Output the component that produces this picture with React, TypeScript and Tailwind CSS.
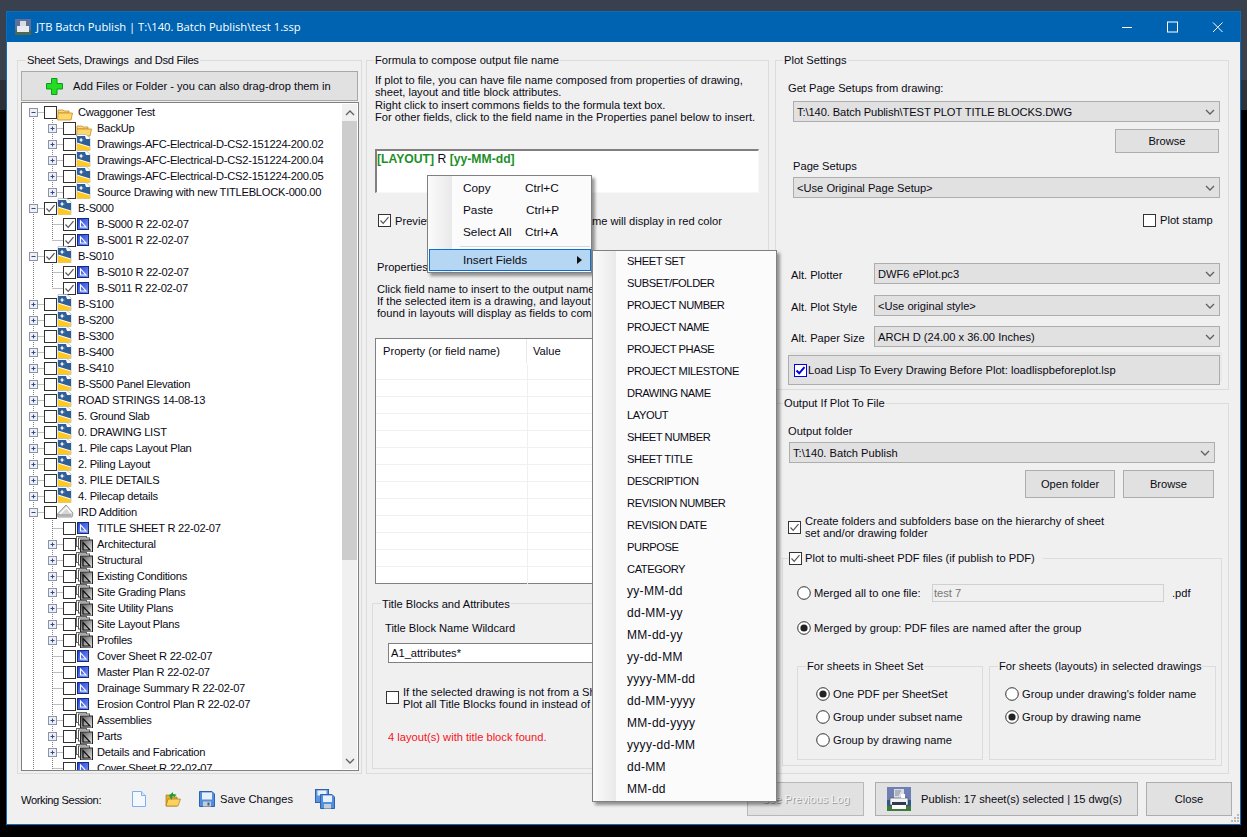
import React from "react";

type Kind = "folder" | "dwg" | "sheet" | "subset" | "ssm";
type Row = { label: string; level: 0 | 1; exp?: "plus" | "minus"; checked?: boolean; icon: Kind; first?: boolean; last?: boolean };

const sub = (label: string): Row => ({ label, level: 1, exp: "plus", icon: "subset" });
const sh = (label: string, checked = false, last = false): Row => ({ label, level: 1, icon: "sheet", checked, last });
const top = (label: string): Row => ({ label, level: 0, exp: "plus", icon: "dwg" });

const rows: Row[] = [
  { label: "Cwaggoner Test", level: 0, exp: "minus", icon: "folder", first: true },
  { label: "BackUp", level: 1, exp: "plus", icon: "folder" },
  { label: "Drawings-AFC-Electrical-D-CS2-151224-200.02", level: 1, exp: "plus", icon: "dwg" },
  { label: "Drawings-AFC-Electrical-D-CS2-151224-200.04", level: 1, exp: "plus", icon: "dwg" },
  { label: "Drawings-AFC-Electrical-D-CS2-151224-200.05", level: 1, exp: "plus", icon: "dwg" },
  { label: "Source Drawing with new TITLEBLOCK-000.00", level: 1, exp: "plus", icon: "dwg", last: true },
  { label: "B-S000", level: 0, exp: "minus", icon: "dwg", checked: true },
  sh("B-S000 R 22-02-07", true),
  sh("B-S001 R 22-02-07", true, true),
  { label: "B-S010", level: 0, exp: "minus", icon: "dwg", checked: true },
  sh("B-S010 R 22-02-07", true),
  sh("B-S011 R 22-02-07", true, true),
  top("B-S100"), top("B-S200"), top("B-S300"), top("B-S400"), top("B-S410"), top("B-S500 Panel Elevation"),
  top("ROAD STRINGS 14-08-13"), top("5. Ground Slab"), top("0. DRAWING LIST"), top("1. Pile caps Layout Plan"),
  top("2. Piling Layout"), top("3. PILE DETAILS"), top("4. Pilecap details"),
  { label: "IRD Addition", level: 0, exp: "minus", icon: "ssm" },
  sh("TITLE SHEET R 22-02-07"),
  sub("Architectural"), sub("Structural"), sub("Existing Conditions"), sub("Site Grading Plans"),
  sub("Site Utility Plans"), sub("Site Layout Plans"), sub("Profiles"),
  sh("Cover Sheet R 22-02-07"), sh("Master Plan R 22-02-07"), sh("Drainage Summary R 22-02-07"), sh("Erosion Control Plan R 22-02-07"),
  sub("Assemblies"), sub("Parts"), sub("Details and Fabrication"),
  sh("Cover Sheet R 22-02-07"),
];

const upperFields = ["SHEET SET", "SUBSET/FOLDER", "PROJECT NUMBER", "PROJECT NAME", "PROJECT PHASE", "PROJECT MILESTONE", "DRAWING NAME", "LAYOUT", "SHEET NUMBER", "SHEET TITLE", "DESCRIPTION", "REVISION NUMBER", "REVISION DATE", "PURPOSE", "CATEGORY"];
const dateFields = ["yy-MM-dd", "dd-MM-yy", "MM-dd-yy", "yy-dd-MM", "yyyy-MM-dd", "dd-MM-yyyy", "MM-dd-yyyy", "yyyy-dd-MM", "dd-MM", "MM-dd"];

function Gutter({ r }: { r: Row }) {
  const w = r.level === 0 ? 22 : 41;
  const cx = r.level === 0 ? 11.5 : 30.5;
  const dot = { stroke: "#808080", strokeWidth: 1, strokeDasharray: "1 1" };
  return (
    <svg width={w} height={16} className="shrink-0 block">
      <line x1={11.5} x2={11.5} y1={r.first ? 8 : 0} y2={16} {...dot} />
      {r.level === 1 && <line x1={30.5} x2={30.5} y1={0} y2={r.last ? 8 : 16} {...dot} />}
      <line x1={cx} x2={w} y1={8.5} y2={8.5} {...dot} />
      {r.exp && (
        <g>
          <rect x={cx - 4} y={4.5} width={8} height={8} fill="#eef0f4" stroke="#8a94a6" />
          <line x1={cx - 2} x2={cx + 2} y1={8.5} y2={8.5} stroke="#2c4a9a" />
          {r.exp === "plus" && <line x1={cx} x2={cx} y1={6.5} y2={10.5} stroke="#2c4a9a" />}
        </g>
      )}
    </svg>
  );
}

function Box({ checked, blue }: { checked?: boolean; blue?: boolean }) {
  const c = blue ? "#0000e0" : "#333333";
  return (
    <svg width={13} height={13} className="shrink-0 block">
      <rect x={0.5} y={0.5} width={12} height={12} fill="#fff" stroke={c} />
      {checked && <path d="M2.5 6.5 L5.2 9.3 L10.5 3.2" fill="none" stroke={blue ? "#0000e0" : "#555"} strokeWidth={blue ? 2 : 1.2} />}
    </svg>
  );
}

function Radio({ on }: { on?: boolean }) {
  return (
    <svg width={14} height={14} className="shrink-0 block">
      <circle cx={7} cy={7} r={6.3} fill="#fff" stroke="#333" />
      {on && <circle cx={7} cy={7} r={3.6} fill="#222" />}
    </svg>
  );
}

function Icon({ k }: { k: Kind }) {
  if (k === "folder")
    return (
      <svg width={16} height={14} className="shrink-0 block mt-[3px]">
        <path d="M1 3 h5 l1 1 h5 v2 H1z" fill="#f9d88a" stroke="#c98a1e" strokeWidth={0.8} />
        <path d="M0.6 13 L1 6 H15.5 L14 13z" fill="#fdd86c" stroke="#c98a1e" strokeWidth={0.8} />
      </svg>
    );
  if (k === "dwg")
    return (
      <svg width={15} height={17} className="shrink-0 block -mt-[3px]">
        <path d="M1 0.5 H10 L14 4 V16.5 H1z" fill="#fff" stroke="#9aa8c0" strokeWidth={0.6} />
        <path d="M1 2 H9 L10 5 H14 V12.5 L1 8.5z" fill="#2f5f96" />
        <path d="M1 9.5 L14 13.5 V16.5 H1z" fill="#ffc91f" />
        <path d="M5 3.5 L6 5.5 L8 6 L6 6.6 L5 8.6 L4.2 6.6 L2.4 6 L4.2 5.5z" fill="#fff" />
      </svg>
    );
  if (k === "sheet")
    return (
      <svg width={12} height={12} className="shrink-0 block ml-[1px]">
        <defs>
          <linearGradient id="sg" x1="0" y1="0" x2="1" y2="1">
            <stop offset="0" stopColor="#1c3de0" />
            <stop offset="1" stopColor="#7f9cf5" />
          </linearGradient>
        </defs>
        <rect x={0.5} y={0.5} width={11} height={11} fill="url(#sg)" stroke="#1a2a70" />
        <path d="M3.5 3 V9 H9z" fill="none" stroke="#fff" strokeWidth={1.1} />
      </svg>
    );
  if (k === "subset")
    return (
      <svg width={17} height={16} className="shrink-0 block -mt-[1px]">
        <defs>
          <linearGradient id="gg" x1="0" y1="0" x2="1" y2="1">
            <stop offset="0" stopColor="#555" />
            <stop offset="1" stopColor="#ececec" />
          </linearGradient>
        </defs>
        <rect x={0.5} y={0.5} width={10} height={10} fill="#fff" stroke="#666" />
        <rect x={2.5} y={2} width={11} height={11} fill="#fff" stroke="#555" />
        <rect x={4.5} y={4} width={12} height={12} fill="url(#gg)" stroke="#222" />
        <path d="M7 6.5 V14 H14z" fill="none" stroke="#111" strokeWidth={1.2} />
      </svg>
    );
  return (
    <svg width={17} height={14} className="shrink-0 block -mt-[2px]">
      <path d="M0.5 10 L9 1 L16 9 L15 13 H1z" fill="#d6d6d6" stroke="#9a9a9a" />
      <path d="M3 10 L9.5 3.5 L14 9" fill="none" stroke="#fff" strokeWidth={1.3} />
      <path d="M1 11 H14" stroke="#888" />
    </svg>
  );
}

function TreeRow({ r }: { r: Row }) {
  return (
    <div className="flex h-[16px] items-center whitespace-nowrap">
      <Gutter r={r} />
      <Box checked={r.checked} />
      <div className="w-[21px] shrink-0">
        <Icon k={r.icon} />
      </div>
      <span className="tracking-[-0.25px]">{r.label}</span>
    </div>
  );
}

function Chevron({ up }: { up?: boolean }) {
  return (
    <svg width={10} height={6} className="block">
      <path d={up ? "M1 5 L5 1 L9 5" : "M1 1 L5 5 L9 1"} fill="none" stroke="#606060" strokeWidth={1.3} />
    </svg>
  );
}

function Combo({ text, className }: { text: string; className: string }) {
  return (
    <div className={`flex h-[21px] items-center justify-between border border-[#adadad] bg-[#e1e1e1] pl-[3px] pr-[4px] ${className}`}>
      <span>{text}</span>
      <Chevron />
    </div>
  );
}

function Btn({ children, className }: { children: React.ReactNode; className: string }) {
  return <div className={`flex items-center justify-center border border-[#adadad] bg-[#e1e1e1] ${className}`}>{children}</div>;
}

function DocIcon() {
  return (
    <svg width={14} height={16} className="block shrink-0">
      <path d="M0.5 0.5 H9.5 L13.5 4.5 V15.5 H0.5z" fill="#f4f8ff" stroke="#7fb0ec" />
      <path d="M9.5 0.5 V4.5 H13.5" fill="#d8e8fb" stroke="#7fb0ec" />
    </svg>
  );
}
function OpenIcon() {
  return (
    <svg width={16} height={15} className="block shrink-0">
      <path d="M1 3 H6 L7 5 H12 V14 H1z" fill="#e8a92f" stroke="#a87d1e" strokeWidth={0.7} />
      <path d="M1 14 L3 7 H15.5 L13 14z" fill="#fbd25b" stroke="#a87d1e" strokeWidth={0.7} />
      <path d="M6.5 8 L4 3.5 L8 0 L8 2 L11.5 2.5 L9.5 5 L7.5 4z" fill="#1f9e33" />
    </svg>
  );
}
function SaveIcon() {
  return (
    <svg width={16} height={16} className="block shrink-0">
      <path d="M0.5 0.5 H13 L15.5 3 V15.5 H0.5z" fill="#4f8fe0" stroke="#2f62a8" />
      <rect x={3} y={1.5} width={10} height={7} fill="#e8f1fb" />
      <rect x={4} y={10.5} width={8} height={5} fill="#c8ccd4" />
      <rect x={8.5} y={11.5} width={2} height={3} fill="#556" />
    </svg>
  );
}
function SaveAllIcon() {
  return (
    <svg width={20} height={20} className="block shrink-0">
      <rect x={0.5} y={0.5} width={13} height={13} fill="#5c96e2" stroke="#2f62a8" />
      <rect x={2.5} y={1.5} width={9} height={5} fill="#e8f1fb" />
      <path d="M5.5 5.5 H17 L19.5 8 V19.5 H5.5z" fill="#4f8fe0" stroke="#2f62a8" />
      <rect x={8} y={6.5} width={9} height={6.5} fill="#e8f1fb" />
      <rect x={9} y={15} width={7} height={4.5} fill="#c8ccd4" />
    </svg>
  );
}
function PrinterIcon() {
  return (
    <svg width={24} height={24} className="block shrink-0">
      <rect width={24} height={24} fill="#6f7fb4" />
      <rect y={13} width={24} height={6} fill="#2f5a8a" />
      <rect y={19} width={24} height={5} fill="#3f7a3a" />
      <rect x={7} y={2} width={10} height={9} fill="#d8dce4" />
      <path d="M8 4 H14 M8 6 H13 M8 8 H12" stroke="#7f8899" />
      <path d="M3 11 H21 V18 H3z" fill="#f2f3f6" stroke="#445" strokeWidth={0.6} />
      <rect x={5} y={15} width={14} height={3} fill="#333a4a" />
      <rect x={5} y={18} width={14} height={4} fill="#ffffff" />
      <rect x={14} y={7} width={4} height={4} fill="#ffffff" />
    </svg>
  );
}

function MenuRow({ a, b, w }: { a: string; b: string; w: string }) {
  return (
    <div className="flex h-[22px] items-center pl-[35px]">
      <span className={w}>{a}</span>
      <span>{b}</span>
    </div>
  );
}

export default function App() {
  return (
    <div className="h-[837px] w-[1247px] overflow-hidden bg-[linear-gradient(#3a414e_0,#3a414e_80px,#2c3038_80px,#2c3038_110px,#000_110px)] pl-[6px] pt-[11px] text-[11.15px] leading-[14px] text-[#0a0a14] [font-family:'Liberation_Sans',sans-serif]">
      <div className="relative flex h-[814px] w-[1235px] flex-col border border-[#0f6cb8] bg-[#f0f0f0]">
        {/* Title bar */}
        <div className="flex h-[30px] shrink-0 items-center bg-[#0063b1] pl-[8px] text-white">
          <svg width={16} height={16} className="block shrink-0">
            <rect width={16} height={16} fill="#5f6f9a" />
            <rect y={11} width={16} height={5} fill="#4d6a50" />
            <rect x={5} y={2} width={6} height={5} fill="#d8dce4" />
            <rect x={2} y={7} width={12} height={6} fill="#e8eaf0" />
          </svg>
          <span className="ml-[5px] text-[11.2px] [font-family:'Open_Sans',sans-serif]">JTB Batch Publish | T:\140. Batch Publish\test 1.ssp</span>
          <svg width={106} height={12} className="ml-auto mr-[12px] block shrink-0" stroke="#fff" fill="none">
            <path d="M0 6.5 H10" />
            <rect x={45.5} y={1} width={10} height={10} />
            <path d="M91 1.5 L100.5 11 M100.5 1.5 L91 11" />
          </svg>
        </div>

        {/* Panels */}
        <div className="flex flex-1 flex-col pl-[10px] pr-[8px] pt-[11px]">
          <div className="flex items-start">
            {/* Left column */}
            <fieldset className="h-[721px] w-[345px] shrink-0 border border-[#dcdcdc] pl-[3px]">
              <legend className="ml-[5px] px-[1px] leading-[14px] tracking-[-0.28px]">Sheet Sets, Drawings&nbsp; and Dsd Files</legend>
              <div className="mt-[4px] flex h-[30px] w-[337px] items-center border border-[#a8a8a8] bg-[#e1e1e1] pl-[24px]">
                <svg width={17} height={17} className="block shrink-0">
                  <path d="M5.5 0.5 H11 V5.5 H16.5 V11 H11 V16.5 H5.5 V11 H0.5 V5.5 H5.5z" fill="#22dd22" stroke="#0f9a1f" />
                </svg>
                <span className="ml-[10px]">Add Files or Folder - you can also drag-drop them in</span>
              </div>
              <div className="mt-[1px] flex h-[669px] w-[338px] overflow-hidden border border-[#808080] bg-white">
                <div className="w-[320px] shrink-0 overflow-hidden pt-[1px]">
                  {rows.map((r, i) => (
                    <TreeRow key={i} r={r} />
                  ))}
                </div>
                <div className="mt-[1px] flex h-[665px] w-[15px] shrink-0 flex-col bg-[#f0f0f0]">
                  <div className="flex h-[17px] items-center justify-center"><Chevron up /></div>
                  <div className="h-[439px] bg-[#cdcdcd]" />
                  <div className="flex-1" />
                  <div className="flex h-[17px] items-center justify-center"><Chevron /></div>
                </div>
              </div>
            </fieldset>

            {/* Middle column */}
            <fieldset className="ml-[4px] h-[721px] w-[403px] shrink-0 border border-[#dcdcdc]">
              <legend className="ml-[7px] px-[1px] leading-[14px]">Formula to compose output file name</legend>
              <p className="ml-[8px] mt-[7px] leading-[12.4px]">
                If plot to file, you can have file name composed from properties of drawing,<br />
                sheet, layout and title block attributes.<br />
                Right click to insert commons fields to the formula text box.<br />
                For other fields, click to the field name in the Properties panel below to insert.
              </p>
              <div className="ml-[8px] mt-[25px] h-[44px] w-[384px] border-b border-l-2 border-r border-t-2 border-b-[#f8f8f8] border-l-[#808080] border-r-[#f8f8f8] border-t-[#808080] bg-white pt-[1px] text-[12.2px]">
                <b className="text-[#1d8f2a]">[LAYOUT]</b> R <b className="text-[#1d8f2a]">[yy-MM-dd]</b>
              </div>
              <div className="ml-[11px] mt-[21px] flex h-[14px] items-center whitespace-nowrap">
                <Box checked />
                <span className="ml-[4px]">Preview output file name - Invalid file name will display in red color</span>
              </div>
              <div className="ml-[10px] mt-[32px]">Properties</div>
              <p className="ml-[10px] mt-[9px] whitespace-nowrap leading-[12.4px]">
                Click field name to insert to the output name<br />
                If the selected item is a drawing, and layout<br />
                found in layouts will display as fields to compose
              </p>
              <div className="ml-[8px] mt-[18px] h-[246px] w-[384px] border border-[#808080] bg-white">
                <div className="flex h-[25px] items-center pl-[7px]">
                  <span className="flex h-[24px] w-[144px] items-center border-r border-[#e8e8e8]">Property (or field name)</span>
                  <span className="ml-[6px]">Value</span>
                </div>
                {Array.from({ length: 13 }).map((_, i) => (
                  <div key={i} className={`flex ${i === 0 ? "h-[16px]" : "h-[17px]"} ${i < 12 ? "border-b border-[#f0f0f0]" : ""}`}>
                    <div className="w-[152px] border-r border-[#f0f0f0]" />
                  </div>
                ))}
              </div>
              <fieldset className="ml-[5px] mt-[13px] h-[172px] w-[392px] border border-[#dcdcdc]">
                <legend className="ml-[8px] px-[1px] leading-[14px]">Title Blocks and Attributes</legend>
                <div className="ml-[12px] mt-[10px]">Title Block Name Wildcard</div>
                <div className="ml-[15px] mt-[8px] flex h-[20px] w-[340px] items-center border border-[#808080] bg-white pl-[2px]">A1_attributes*</div>
                <div className="ml-[13px] mt-[23px] flex h-[24px] items-center whitespace-nowrap">
                  <Box />
                  <p className="ml-[4px] leading-[12px]">
                    If the selected drawing is not from a Sheet Set,<br />
                    Plot all Title Blocks found in instead of layouts
                  </p>
                </div>
                <div className="ml-[15px] mt-[20px] text-[#f5141e]">4 layout(s) with title block found.</div>
              </fieldset>
            </fieldset>

            {/* Right column */}
            <div className="ml-[6px] flex w-[454px] shrink-0 flex-col">
              <fieldset className="h-[337px] border border-[#dcdcdc]">
                <legend className="ml-[7px] px-[1px] leading-[14px]">Plot Settings</legend>
                <div className="ml-[12px] mt-[14px]">Get Page Setups from drawing:</div>
                <Combo className="ml-[17px] mt-[6px] w-[427px] tracking-[-0.1px]" text="T:\140. Batch Publish\TEST PLOT TITLE BLOCKS.DWG" />
                <Btn className="ml-[339px] mt-[7px] h-[24px] w-[104px]">Browse</Btn>
                <div className="ml-[17px] mt-[6px]">Page Setups</div>
                <Combo className="ml-[17px] mt-[4px] w-[427px]" text="<Use Original Page Setup>" />
                <div className="ml-[367px] mt-[15px] flex h-[14px] items-center">
                  <Box />
                  <span className="ml-[4px]">Plot stamp</span>
                </div>
                <div className="ml-[15px] mt-[36px] flex items-center">
                  <span className="mt-[3px] w-[83px]">Alt. Plotter</span>
                  <Combo className="w-[346px]" text="DWF6 ePlot.pc3" />
                </div>
                <div className="ml-[15px] mt-[11px] flex items-center">
                  <span className="mt-[3px] w-[83px]">Alt. Plot Style</span>
                  <Combo className="w-[346px]" text="<Use original style>" />
                </div>
                <div className="ml-[15px] mt-[10px] flex items-center">
                  <span className="mt-[3px] w-[83px]">Alt. Paper Size</span>
                  <Combo className="w-[346px]" text="ARCH D (24.00 x 36.00 Inches)" />
                </div>
                <div className="ml-[12px] mt-[8px] flex h-[30px] w-[432px] items-center border border-[#adadad] bg-[#e1e1e1] pl-[5px] shadow-[2px_-3px_0_#e9e9e9]">
                  <Box checked blue />
                  <span className="ml-[1px]">Load Lisp To Every Drawing Before Plot: loadlispbeforeplot.lsp</span>
                </div>
              </fieldset>

              <fieldset className="mt-[6px] h-[378px] border border-[#dcdcdc]">
                <legend className="ml-[7px] px-[1px] leading-[14px]">Output If Plot To File</legend>
                <div className="ml-[12px] mt-[14px]">Output folder</div>
                <Combo className="ml-[13px] mt-[4px] w-[426px]" text="T:\140. Batch Publish" />
                <div className="ml-[249px] mt-[7px] flex gap-[8px]">
                  <Btn className="h-[28px] w-[90px]">Open folder</Btn>
                  <Btn className="h-[28px] w-[91px]">Browse</Btn>
                </div>
                <div className="ml-[12px] mt-[17px] flex items-center">
                  <Box checked />
                  <p className="ml-[4px] leading-[12px]">
                    Create folders and subfolders base on the hierarchy of sheet<br />
                    set and/or drawing folder
                  </p>
                </div>
                <fieldset className="ml-[6px] mt-[12px] h-[215px] w-[440px] border border-[#dcdcdc]">
                  <legend className="ml-[6px] flex h-[14px] items-center pr-[8px]">
                    <Box checked />
                    <span className="ml-[3px]">Plot to multi-sheet PDF files (if publish to PDF)</span>
                  </legend>
                  <div className="ml-[14px] mt-[19px] flex h-[18px] items-center">
                    <Radio />
                    <span className="ml-[3px] w-[118px]">Merged all to one file:</span>
                    <div className="flex h-[18px] w-[232px] items-center border border-[#d0d0d0] bg-[#f0f0f0] pl-[1px] text-[#777]">test 7</div>
                    <span className="ml-[8px]">.pdf</span>
                  </div>
                  <div className="ml-[14px] mt-[19px] flex h-[14px] items-center">
                    <Radio on />
                    <span className="ml-[3px]">Merged by group: PDF files are named after the group</span>
                  </div>
                  <div className="ml-[14px] mt-[24px] flex gap-[6px]">
                    <fieldset className="h-[101px] w-[186px] border border-[#dcdcdc]">
                      <legend className="ml-[8px] px-[1px] leading-[14px]">For sheets in Sheet Set</legend>
                      <div className="ml-[18px] mt-[14px] flex flex-col gap-[9px]">
                        <div className="flex h-[14px] items-center"><Radio on /><span className="ml-[3px]">One PDF per SheetSet</span></div>
                        <div className="flex h-[14px] items-center"><Radio /><span className="ml-[3px]">Group under subset name</span></div>
                        <div className="flex h-[14px] items-center"><Radio /><span className="ml-[3px]">Group by drawing name</span></div>
                      </div>
                    </fieldset>
                    <fieldset className="h-[101px] w-[227px] border border-[#dcdcdc]">
                      <legend className="ml-[8px] px-[1px] leading-[14px]">For sheets (layouts) in selected drawings</legend>
                      <div className="ml-[15px] mt-[14px] flex flex-col gap-[9px]">
                        <div className="flex h-[14px] items-center"><Radio /><span className="ml-[3px]">Group under drawing's folder name</span></div>
                        <div className="flex h-[14px] items-center"><Radio on /><span className="ml-[3px]">Group by drawing name</span></div>
                      </div>
                    </fieldset>
                  </div>
                </fieldset>
              </fieldset>
            </div>
          </div>

          {/* Bottom bar */}
          <div className="mt-[8px] flex h-[34px] items-center">
            <span className="ml-[4px] mt-[1px] w-[111px] shrink-0 tracking-[-0.4px]">Working Session:</span>
            <DocIcon />
            <div className="ml-[19px]"><OpenIcon /></div>
            <div className="ml-[18px]"><SaveIcon /></div>
            <span className="ml-[5px] w-[95px] shrink-0">Save Changes</span>
            <SaveAllIcon />
            <Btn className="ml-auto h-[34px] w-[117px] border-[#b8b8b8] bg-[#cccccc] text-[#f4f4f4] [text-shadow:1px_1px_0_#9a9a9a]">See Previous Log</Btn>
            <Btn className="ml-[11px] h-[34px] w-[263px] justify-start pl-[11px]">
              <PrinterIcon />
              <span className="ml-[10px]">Publish: 17 sheet(s) selected | 15 dwg(s)</span>
            </Btn>
            <Btn className="ml-[8px] h-[34px] w-[86px]">Close</Btn>
          </div>
        </div>

        {/* Context menu */}
        <div className="absolute left-[420px] top-[163px] z-10 h-[98px] w-[165px] border border-[#808080] bg-[#fbfbfb] bg-[linear-gradient(90deg,#fbfbfb_0,#e9e9e9_24px,#fbfbfb_24px)] pt-[1px] text-[11.8px] shadow-[3px_3px_3px_rgba(0,0,0,0.4)]">
          <MenuRow a="Copy" b="Ctrl+C" w="w-[62px]" />
          <MenuRow a="Paste" b="Ctrl+P" w="w-[63px]" />
          <MenuRow a="Select All" b="Ctrl+A" w="w-[62px]" />
          <div className="ml-[32px] mt-[3px] h-[1px] w-[130px] bg-[#d8d8d8]" />
          <div className="ml-[1px] mt-[2px] flex h-[22px] items-center border border-[#0a6fd0] bg-[#b5d7f3] pl-[33px]">
            <span>Insert Fields</span>
            <svg width={5} height={8} className="ml-[50px] block"><path d="M0 0 L5 4 L0 8z" fill="#111" /></svg>
          </div>
        </div>

        {/* Insert-fields submenu */}
        <div className="absolute left-[585px] top-[238px] z-20 h-[552px] w-[185px] border border-[#808080] bg-[#fbfbfb] bg-[linear-gradient(90deg,#fbfbfb_0,#e9e9e9_23px,#fbfbfb_23px)] shadow-[3px_3px_3px_rgba(0,0,0,0.4)]">
          {upperFields.map((f) => (
            <div key={f} className="flex h-[22px] items-center pb-[2px] pl-[34px] tracking-[-0.42px]">{f}</div>
          ))}
          {dateFields.map((f) => (
            <div key={f} className="flex h-[22px] items-center pb-[2px] pl-[34px] text-[12px] tracking-[0.3px]">{f}</div>
          ))}
        </div>

        {/* Resize grip */}
        <svg width={10} height={10} className="absolute bottom-[1px] right-[1px] block">
          <path d="M8 1h2v2H8zM5 4h2v2H5zM8 4h2v2H8zM2 7h2v2H2zM5 7h2v2H5zM8 7h2v2H8z" fill="#b8b8b8" />
        </svg>
      </div>
    </div>
  );
}
